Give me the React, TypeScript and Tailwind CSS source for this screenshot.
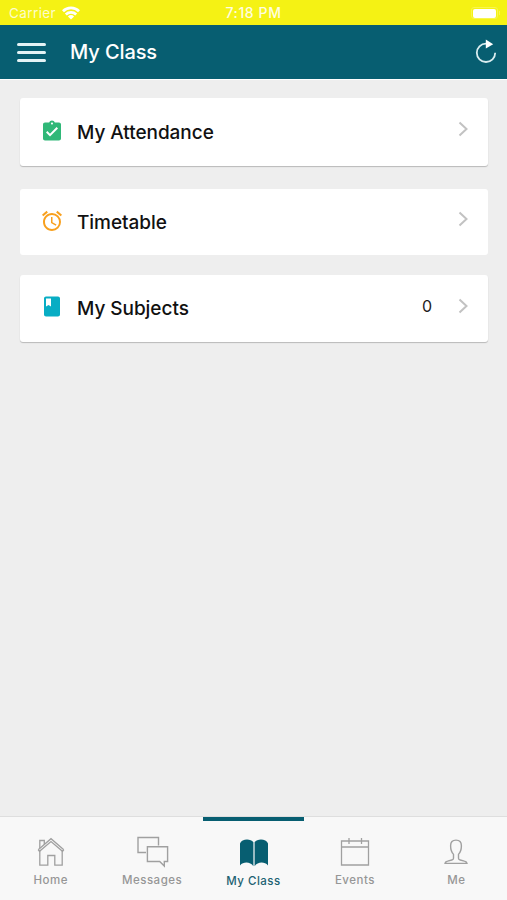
import type { ReactNode } from "react";
import { MdAssignmentTurnedIn, MdAccessAlarm, MdClass } from "react-icons/md";

type CardProps = {
  icon: ReactNode;
  label: string;
  count?: number;
  className: string;
};

type TabProps = {
  icon: ReactNode;
  label: string;
  active?: boolean;
};

function StatusBar() {
  return (
    <div className="grid h-[25px] grid-cols-3 items-center bg-[#f5f214] pt-[3px] text-white">
      <div className="flex items-center pl-[9px] text-[#fdfccb]">
        <span className="-mt-px w-[53px] whitespace-nowrap text-[13.5px] tracking-[0.4px]">Carrier</span>
        <svg width="18" height="14" viewBox="0 0 18 14" fill="none" className="-mt-0.5" stroke="white" strokeWidth="2.8">
          <path d="M1 5.2a11.5 11.5 0 0 1 16 0M3.8 8.4a7.6 7.6 0 0 1 10.4 0" />
          <path d="M9 13.5 5.9 10.4a4.5 4.5 0 0 1 6.2 0z" fill="white" stroke="none" />
        </svg>
      </div>
      <div className="-mt-[3px] text-center text-[14px] font-medium tracking-[0.6px] text-[#fffde0]">7:18 PM</div>
      <div className="flex items-center justify-end pr-[7px]">
        <div className="-mt-[2px] flex h-[12px] w-[27px] items-center justify-center rounded-[3px] border border-[#f7f550]">
          <div className="h-[9px] w-[23px] rounded-[2px] bg-white" />
        </div>
        <div className="-mt-[2px] ml-px h-1 w-px bg-[#f7f550]" />
      </div>
    </div>
  );
}

function Header() {
  return (
    <header className="flex h-[55px] items-center border-b border-white bg-[#075e71] text-white">
      <div className="ml-[17px] mt-px flex w-[28.5px] flex-col gap-[5.5px]">
        <div className="h-[2.5px] rounded-full bg-[#e4f3f5]" />
        <div className="h-[2.5px] rounded-full bg-[#e4f3f5]" />
        <div className="h-[2.5px] rounded-full bg-[#e4f3f5]" />
      </div>
      <h1 className="ml-[24.5px] text-[20px] font-medium tracking-[-0.1px]">My Class</h1>
      <svg width="22" height="24" viewBox="0 0 22 24" fill="none" className="ml-auto mr-[10px] -mt-[3px]">
        <path d="M11 4.6a9.2 9.2 0 1 0 9.2 9.2" stroke="#d9edf0" strokeWidth="1.8" />
        <path d="M10.8.5 18.2 5.2l-7.4 4.3z" fill="white" />
      </svg>
    </header>
  );
}

function Card({ icon, label, count, className }: CardProps) {
  return (
    <div className={`flex items-center rounded-[3px] bg-white pl-[20px] pr-[19px] ${className}`}>
      <div className="flex w-6 justify-center">{icon}</div>
      <div className="ml-[13px] mt-[2px] text-[19px] font-medium tracking-[-0.05px] text-[#111]">{label}</div>
      <div className="-mt-[6px] ml-auto flex items-center">
        {count !== undefined && <span className="mr-[26px] text-[16px] leading-4 text-[#222]">{count}</span>}
        <svg width="11" height="16" viewBox="0 0 11 16" fill="none" stroke="#c2c2c2" strokeWidth="2">
          <path d="m1.5 1.5 7 6.5-7 6.5" />
        </svg>
      </div>
    </div>
  );
}

function Tab({ icon, label, active }: TabProps) {
  return (
    <div
      className={
        active
          ? "flex flex-1 flex-col items-center border-t-4 border-[#075e71] pt-[14px] text-[#1d6272]"
          : "flex flex-1 flex-col items-center pt-[17px] text-[#969696]"
      }
    >
      <div className="flex h-[35px] items-center">{icon}</div>
      <span className="mt-[3px] text-[11.5px] font-medium leading-4 tracking-[0.5px]">{label}</span>
    </div>
  );
}

function HomeIcon() {
  return (
    <svg width="28" height="30" viewBox="0 0 28 30" fill="none" stroke="#a0a0a0" strokeWidth="1.3" className="ml-px">
      <path d="M1.2 12.8 14 1.7l12.8 11.1M1.2 12.8l1.3 1.5L14 4.5l11.5 9.8 1.3-1.5" />
      <path d="M2.8 11V3.5h4.5v3.8M2.8 13.5v14.7h8V18.5h7v9.7h7.4V13.5" />
    </svg>
  );
}

function MessagesIcon() {
  return (
    <svg width="32" height="32" viewBox="0 0 32 32" fill="none" stroke="#a0a0a0" strokeWidth="1.4" className="ml-[2px]">
      <path d="M9 16.5H1V1.5h20.5v8" />
      <path d="M10.4 10.8h20.2v14.7h-3.3v4.5l-4.6-4.5H10.4z" />
    </svg>
  );
}

function BookIcon() {
  return (
    <svg width="30" height="28" viewBox="0 0 30 28" fill="#075e71">
      <path d="M1 4.5C2.5-.3 11.5-.8 14.4 3.2v24C11.5 22.8 4.5 22.3 1 26.5z" />
      <path d="M29 4.5C27.5-.3 18.5-.8 15.6 3.2v24c2.9-4.4 9.9-4.9 13.4-.7z" />
    </svg>
  );
}

function EventsIcon() {
  return (
    <svg width="30" height="30" viewBox="0 0 30 30" fill="none" stroke="#a0a0a0" strokeWidth="1.3">
      <path d="M1.5 4h27v24h-27zM1.5 10h27M9 1v6M21.5 1v6" />
    </svg>
  );
}

function MeIcon() {
  return (
    <svg width="24" height="26" viewBox="0 0 24 26" fill="none" stroke="#a0a0a0" strokeWidth="1.4">
      <path d="M9.5 15.4C7.3 13 6.6 10 6.6 6.7c0-3.6 2-5.6 5.4-5.6s5.4 2 5.4 5.6c0 3.3-.7 6.3-2.9 8.7v3.8c0 1 .6 1.5 1.7 1.8l4.2 1.1c1.7.4 2.5 1.1 2.6 2.3H1c.1-1.2.9-1.9 2.6-2.3L7.8 21c1.1-.3 1.7-.8 1.7-1.8z" />
    </svg>
  );
}

export default function App() {
  return (
    <div className="flex h-[900px] w-[507px] flex-col overflow-hidden bg-[#eeeeee] font-[Inter,'Liberation_Sans',sans-serif]">
      <StatusBar />
      <Header />

      <main className="flex flex-1 flex-col pl-[20px] pr-[19px] pt-[18px]">
        <Card
          className="h-[68px] shadow-[0_1px_1px_#b8b8b8]"
          icon={<MdAssignmentTurnedIn size={25} color="#30b878" className="-mt-[2px]" />}
          label="My Attendance"
        />
        <Card
          className="mt-[23px] h-[66px]"
          icon={<MdAccessAlarm size={24} color="#f8a01e" className="-mt-[2px]" />}
          label="Timetable"
        />
        <Card
          className="mt-[20px] h-[67px] shadow-[0_1px_1px_#b8b8b8]"
          icon={<MdClass size={25} color="#08adc4" className="-mt-[4px]" />}
          label="My Subjects"
          count={0}
        />
      </main>

      <nav className="flex h-[84px] border-t border-[#dedede] bg-[#f8f8f8]">
        <Tab icon={<HomeIcon />} label="Home" />
        <Tab icon={<MessagesIcon />} label="Messages" />
        <Tab icon={<BookIcon />} label="My Class" active />
        <Tab icon={<EventsIcon />} label="Events" />
        <Tab icon={<MeIcon />} label="Me" />
      </nav>
    </div>
  );
}
